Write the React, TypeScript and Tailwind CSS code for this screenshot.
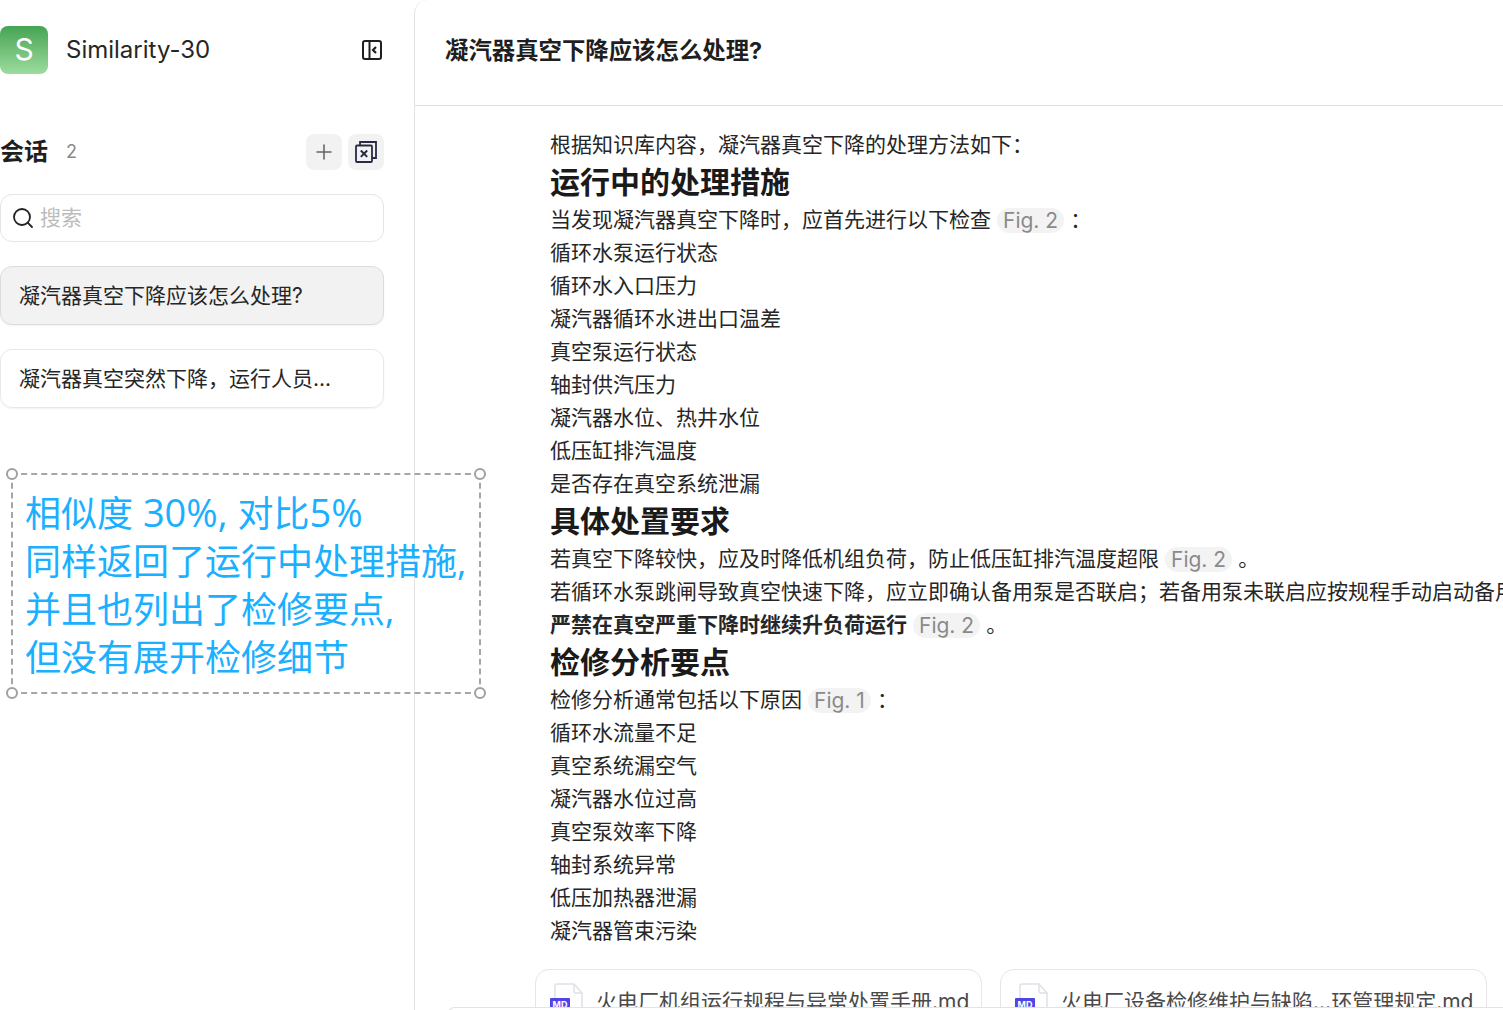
import { Plus, Search } from "lucide-react";

const FONT = "font-['Inter','Noto_Sans_CJK_SC',sans-serif]";

function Fig({ n }: { n: number }) {
  return (
    <span className="mx-[6px] inline-block h-[25px] rounded-full bg-[#f3f3f3] px-[6px] align-[-1px] text-[21px] leading-[25px] text-[#8a8a8a]">
      Fig. {n}
    </span>
  );
}

function Line({ children }: { children: React.ReactNode }) {
  return <p className="h-[33px] whitespace-nowrap text-[21px] leading-[33px] text-[#262626]">{children}</p>;
}

function Heading({ children }: { children: React.ReactNode }) {
  return <h2 className="h-[42px] whitespace-nowrap text-[30px] font-bold leading-[42px] text-[#1a1a1a]">{children}</h2>;
}

function PanelIcon() {
  return (
    <svg width="20" height="20" viewBox="0 0 20 20" fill="none" stroke="#1f1f1f" strokeWidth="2">
      <rect x="1" y="1" width="18" height="18" rx="2" />
      <path d="M7.5 1v18" />
      <path d="M14 7l-3 3 3 3" strokeWidth="2.2" />
    </svg>
  );
}

function CloseAllIcon() {
  return (
    <svg width="24" height="24" viewBox="0 0 24 24" fill="none" stroke="#2b2a45" strokeWidth="1.8">
      <rect x="2" y="5.5" width="16" height="16.5" rx="1" />
      <path d="M6 5.5V2h16v16h-4" />
      <path d="M6.8 10.5l6.4 6.4M13.2 10.5l-6.4 6.4" strokeWidth="2" />
    </svg>
  );
}

function MdIcon() {
  return (
    <svg width="33" height="42" viewBox="0 0 33 42" fill="none" className="shrink-0">
      <path d="M7 1h17l8 9v30a1 1 0 0 1-1 1H7a2 2 0 0 1-2-2V3a2 2 0 0 1 2-2z" fill="#fff" stroke="#dfe1e8" strokeWidth="1.5" />
      <path d="M24 1v7a2 2 0 0 0 2 2h6" stroke="#dfe1e8" strokeWidth="1.5" />
      <rect x="0" y="15" width="20" height="16" rx="1" fill="#4f46e5" />
      <text x="10" y="25" textAnchor="middle" fontSize="9" fontWeight="700" fill="#fff">MD</text>
    </svg>
  );
}

function Source({ name, w }: { name: string; w: string }) {
  return (
    <div className={`flex h-[80px] shrink-0 items-start gap-[13px] rounded-[14px] border border-[#e4e6ec] pl-[14px] pt-[13px] ${w}`}>
      <MdIcon />
      <span className="whitespace-nowrap pt-[2px] text-[21px] leading-[33px] text-[#4a4a4a]">{name}</span>
    </div>
  );
}

export default function App() {
  return (
    <div className={`relative flex h-[1010px] w-[1503px] overflow-hidden bg-white ${FONT}`}>
      <aside className="w-[414px] shrink-0 pr-[30px] pt-[26px]">
        <div className="flex h-[48px] items-center">
          <div className="flex h-[48px] w-[48px] items-center justify-center rounded-[8px] bg-gradient-to-b from-[#43a453] to-[#9ddc9f] pb-[2px] text-[30px] text-white">S</div>
          <span className="ml-[18px] text-[24px] text-[#262626]">Similarity-30</span>
          <div className="ml-auto mr-[2px] flex">
            <PanelIcon />
          </div>
        </div>
        <div className="mt-[60px] flex h-[36px] items-center">
          <span className="text-[24px] font-bold text-[#1f1f1f]">会话</span>
          <span className="mb-[1px] ml-[18px] text-[18px] text-[#8a8a8a]">2</span>
          <button className="ml-auto flex h-[36px] w-[36px] items-center justify-center rounded-[8px] bg-[#f2f2f3] text-[#666]">
            <Plus size={24} strokeWidth={1.6} />
          </button>
          <button className="ml-[6px] flex h-[36px] w-[36px] items-center justify-center rounded-[8px] bg-[#f2f2f3]">
            <CloseAllIcon />
          </button>
        </div>
        <div className="mt-[24px] flex h-[48px] items-center rounded-[12px] border border-[#e5e5e5] pl-[10px]">
          <Search size={24} strokeWidth={1.8} className="text-[#222]" />
          <span className="ml-[5px] text-[21px] text-[#bcbcbc]">搜索</span>
        </div>
        <div className="mt-[24px] flex h-[59px] items-center rounded-[12px] border border-[#dcdcdc] bg-[#f2f2f2] pl-[18px] text-[21px] text-[#262626] shadow-[0_1px_2px_rgba(0,0,0,0.05)]">
          凝汽器真空下降应该怎么处理?
        </div>
        <div className="mt-[24px] flex h-[59px] items-center rounded-[12px] border border-[#e8e8e8] pl-[18px] text-[21px] text-[#262626] shadow-[0_1px_2px_rgba(0,0,0,0.05)]">
          凝汽器真空突然下降，运行人员...
        </div>
      </aside>

      <main className="min-w-0 flex-1 rounded-tl-[14px] border-l border-[#e3e3e3]">
        <header className="flex h-[106px] items-center border-b border-[#e0e0e0] pb-[4px] pl-[30px]">
          <h1 className="text-[23.4px] font-bold text-[#1f1f1f]">凝汽器真空下降应该怎么处理?</h1>
        </header>
        <div className="pl-[135px] pt-[22px]">
          <Line>根据知识库内容，凝汽器真空下降的处理方法如下：</Line>
          <Heading>运行中的处理措施</Heading>
          <Line>当发现凝汽器真空下降时，应首先进行以下检查<Fig n={2} />：</Line>
          <Line>循环水泵运行状态</Line>
          <Line>循环水入口压力</Line>
          <Line>凝汽器循环水进出口温差</Line>
          <Line>真空泵运行状态</Line>
          <Line>轴封供汽压力</Line>
          <Line>凝汽器水位、热井水位</Line>
          <Line>低压缸排汽温度</Line>
          <Line>是否存在真空系统泄漏</Line>
          <Heading>具体处置要求</Heading>
          <Line>若真空下降较快，应及时降低机组负荷，防止低压缸排汽温度超限<Fig n={2} />。</Line>
          <Line>若循环水泵跳闸导致真空快速下降，应立即确认备用泵是否联启；若备用泵未联启应按规程手动启动备用泵</Line>
          <Line><strong className="font-bold">严禁在真空严重下降时继续升负荷运行</strong><Fig n={2} />。</Line>
          <Heading>检修分析要点</Heading>
          <Line>检修分析通常包括以下原因<Fig n={1} />：</Line>
          <Line>循环水流量不足</Line>
          <Line>真空系统漏空气</Line>
          <Line>凝汽器水位过高</Line>
          <Line>真空泵效率下降</Line>
          <Line>轴封系统异常</Line>
          <Line>低压加热器泄漏</Line>
          <Line>凝汽器管束污染</Line>
          <div className="-ml-[15px] mt-[22px] flex gap-[18px]">
            <Source name="火电厂机组运行规程与异常处置手册.md" w="w-[447px]" />
            <Source name="火电厂设备检修维护与缺陷...环管理规定.md" w="w-[487px]" />
          </div>
        </div>
      </main>

      {/* input box peeking in at the bottom edge */}
      <div className="absolute left-[447px] top-[1007px] h-[20px] w-[1056px] rounded-tl-[8px] border-l border-t border-[#e3e3e3] bg-white" />

      {/* annotation over the screenshot */}
      <div className="absolute left-[11px] top-[473px] h-[221px] w-[470px] border-2 border-dashed border-[#a6a6a6] pl-[12px] pt-[15px] font-['Open_Sans','Noto_Sans_CJK_SC',sans-serif] text-[36px] leading-[48px] text-[#1ab0ff]">
        <p className="h-[48px] whitespace-nowrap">相似度<span className="text-[38px] leading-none"> 30%, </span>对比<span className="text-[38px] leading-none">5%</span></p>
        <p className="whitespace-nowrap">同样返回了运行中处理措施,</p>
        <p className="whitespace-nowrap">并且也列出了检修要点,</p>
        <p className="whitespace-nowrap">但没有展开检修细节</p>
        <span className="absolute -left-[7px] -top-[7px] h-[12px] w-[12px] rounded-full border-2 border-[#a0a0a0] bg-white" />
        <span className="absolute -right-[7px] -top-[7px] h-[12px] w-[12px] rounded-full border-2 border-[#a0a0a0] bg-white" />
        <span className="absolute -bottom-[7px] -left-[7px] h-[12px] w-[12px] rounded-full border-2 border-[#a0a0a0] bg-white" />
        <span className="absolute -bottom-[7px] -right-[7px] h-[12px] w-[12px] rounded-full border-2 border-[#a0a0a0] bg-white" />
      </div>
    </div>
  );
}
